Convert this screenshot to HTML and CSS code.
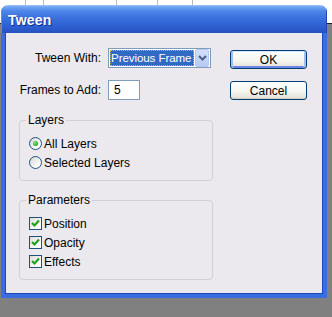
FILE: index.html
```html
<!DOCTYPE html>
<html>
<head>
<meta charset="utf-8">
<link rel="stylesheet" href="styles.css">
</head>
<body>
<div class="window">
  <div class="titlebar">Tween</div>
  <div class="client">
    <div class="left">
      <div class="form-grid">
        <label class="lbl">Tween With:</label>
        <div class="select">
          <span class="sel-text">Previous Frame</span>
          <span class="sel-btn"><svg width="9" height="6" viewBox="0 0 9 6"><path d="M1 1 L4.5 4.5 L8 1" fill="none" stroke="#4d6185" stroke-width="2"/></svg></span>
        </div>
        <label class="lbl">Frames to Add:</label>
        <div class="input">5</div>
      </div>
      <fieldset class="group">
        <legend>Layers</legend>
        <div class="opt"><span class="radio on"><span class="dot"></span></span><span>All Layers</span></div>
        <div class="opt"><span class="radio"></span><span>Selected Layers</span></div>
      </fieldset>
      <fieldset class="group group2">
        <legend>Parameters</legend>
        <div class="opt"><span class="check"><svg width="11" height="11" viewBox="0 0 11 11"><path d="M2 5 L4.5 7.5 L9 2.5" fill="none" stroke="#21a121" stroke-width="2.2"/></svg></span><span>Position</span></div>
        <div class="opt"><span class="check"><svg width="11" height="11" viewBox="0 0 11 11"><path d="M2 5 L4.5 7.5 L9 2.5" fill="none" stroke="#21a121" stroke-width="2.2"/></svg></span><span>Opacity</span></div>
        <div class="opt"><span class="check"><svg width="11" height="11" viewBox="0 0 11 11"><path d="M2 5 L4.5 7.5 L9 2.5" fill="none" stroke="#21a121" stroke-width="2.2"/></svg></span><span>Effects</span></div>
      </fieldset>
    </div>
    <div class="right">
      <button class="btn default">OK</button>
      <button class="btn">Cancel</button>
    </div>
  </div>
</div>
</body>
</html>
```
FILE: styles.css
```css
html, body {
  margin: 0;
  padding: 0;
}
body {
  width: 332px;
  height: 317px;
  overflow: hidden;
  background:
    linear-gradient(to right, transparent 25px, #b8b8b8 25px, #b8b8b8 26px, transparent 26px, transparent 43px, #b8b8b8 43px, #b8b8b8 44px, transparent 44px, transparent 116px, #b8b8b8 116px, #b8b8b8 117px, transparent 117px, transparent 157px, #b8b8b8 157px, #b8b8b8 158px, transparent 158px, transparent 192px, #b8b8b8 192px, #b8b8b8 193px, transparent 193px) 0 0 / 100% 6px no-repeat,
    linear-gradient(to bottom, #ffffff 0, #ffffff 23px, #1e1e1e 23px, #1e1e1e 24px, #808080 24px);
  font-family: "Liberation Sans", Arial, sans-serif;
  font-size: 12px;
  color: #000;
}
.window {
  margin: 5px 0 0 1px;
  width: 326px;
  height: 293px;
  display: flex;
  flex-direction: column;
  border-radius: 7px 7px 0 0;
  overflow: hidden;
}
.titlebar {
  height: 28px;
  flex: none;
  box-sizing: border-box;
  padding: 1px 0 0 7px;
  display: flex;
  align-items: center;
  color: #fff;
  font-weight: bold;
  font-size: 14px;
  letter-spacing: 0.2px;
  text-shadow: 1px 1px 0 #0c2a8c;
  background: linear-gradient(to bottom, #9cc4fa 0, #6ea3f2 2px, #4f86e8 6px, #3c73df 12px, #3266d6 18px, #2b5acb 24px, #2550c0 28px);
  box-shadow: inset 1px 0 #5b8ce8, inset -1px 0 #2148b4;
}
.client {
  flex: 1;
  display: flex;
  gap: 17px;
  padding: 15px 0 0 14px;
  background: #ebe9ed;
  border-style: solid;
  border-color: #3a6de0;
  border-width: 0 4px 4px 4px;
  box-shadow: inset 1px 0 #1c47bd, inset -1px 0 #1c47bd, inset 0 -1px #1c47bd;
}
.left {
  width: 194px;
  flex: none;
}
.form-grid {
  display: grid;
  grid-template-columns: 89px auto;
  grid-auto-rows: 20px;
  row-gap: 12px;
  align-items: center;
}
.lbl {
  text-align: right;
  padding-right: 7px;
  white-space: nowrap;
}
.select {
  width: 103px;
  height: 20px;
  box-sizing: border-box;
  border: 1px solid #7f9db9;
  background: #fff;
  display: flex;
  align-items: center;
  padding: 1px;
  gap: 1px;
}
.sel-text {
  flex: 1;
  height: 16px;
  background: #316ac5;
  color: #fff;
  outline: 1px dotted #c9b64a;
  outline-offset: -1px;
  line-height: 16px;
  padding-left: 1px;
  white-space: nowrap;
  overflow: hidden;
  font-size: 11.6px;
  letter-spacing: -0.1px;
}
.sel-btn {
  width: 14px;
  height: 18px;
  flex: none;
  box-sizing: border-box;
  border: 1px solid #b7c9f2;
  border-radius: 2px;
  background: linear-gradient(to bottom, #d3e0fb, #b6caf5);
  display: flex;
  align-items: center;
  justify-content: center;
}
.input {
  width: 32px;
  height: 20px;
  box-sizing: border-box;
  border: 1px solid #7f9db9;
  background: #fff;
  padding-left: 5px;
  line-height: 18px;
}
.group {
  margin: 13px 0 0 0;
  padding: 7px 6px 8px 6px;
  border: 1px solid #d2d0d5;
  border-radius: 4px;
  min-width: 0;
}
.group2 {
  margin-top: 12px;
}
.group legend {
  padding: 0 2px;
  line-height: 14px;
}
.opt {
  height: 19px;
  display: flex;
  align-items: center;
  gap: 2px;
  padding-left: 3px;
}
.radio {
  width: 13px;
  height: 13px;
  box-sizing: border-box;
  border-radius: 50%;
  border: 1px solid #1c5180;
  background: linear-gradient(135deg, #d6d6d0, #ffffff 80%);
  display: flex;
  align-items: center;
  justify-content: center;
}
.dot {
  width: 5px;
  height: 5px;
  border-radius: 50%;
  background: radial-gradient(circle at 40% 40%, #8ee88e, #21a121 70%);
}
.check {
  width: 13px;
  height: 13px;
  box-sizing: border-box;
  border: 1px solid #1c5180;
  background: linear-gradient(135deg, #dcdcd7, #ffffff 80%);
  display: flex;
  align-items: center;
  justify-content: center;
}
.right {
  width: 77px;
  flex: none;
  margin-top: 2px;
  display: flex;
  flex-direction: column;
  gap: 12px;
}
.btn {
  height: 19px;
  width: 77px;
  box-sizing: border-box;
  padding: 0;
  border: 1px solid #003c74;
  border-radius: 3px;
  background: linear-gradient(to bottom, #ffffff 0, #f4f4f0 60%, #e6e3da 90%, #d8d2c6 100%);
  font-family: "Liberation Sans", Arial, sans-serif;
  font-size: 12px;
  color: #000;
  box-shadow: inset 0 -1px 0 #d6d0c5;
}
.btn.default {
  box-shadow: inset 0 1px 0 #cee7ff, inset 2px 0 0 #a5bdf0, inset -2px 0 0 #a5bdf0, inset 0 -2px 0 #6a86e6;
}
```
